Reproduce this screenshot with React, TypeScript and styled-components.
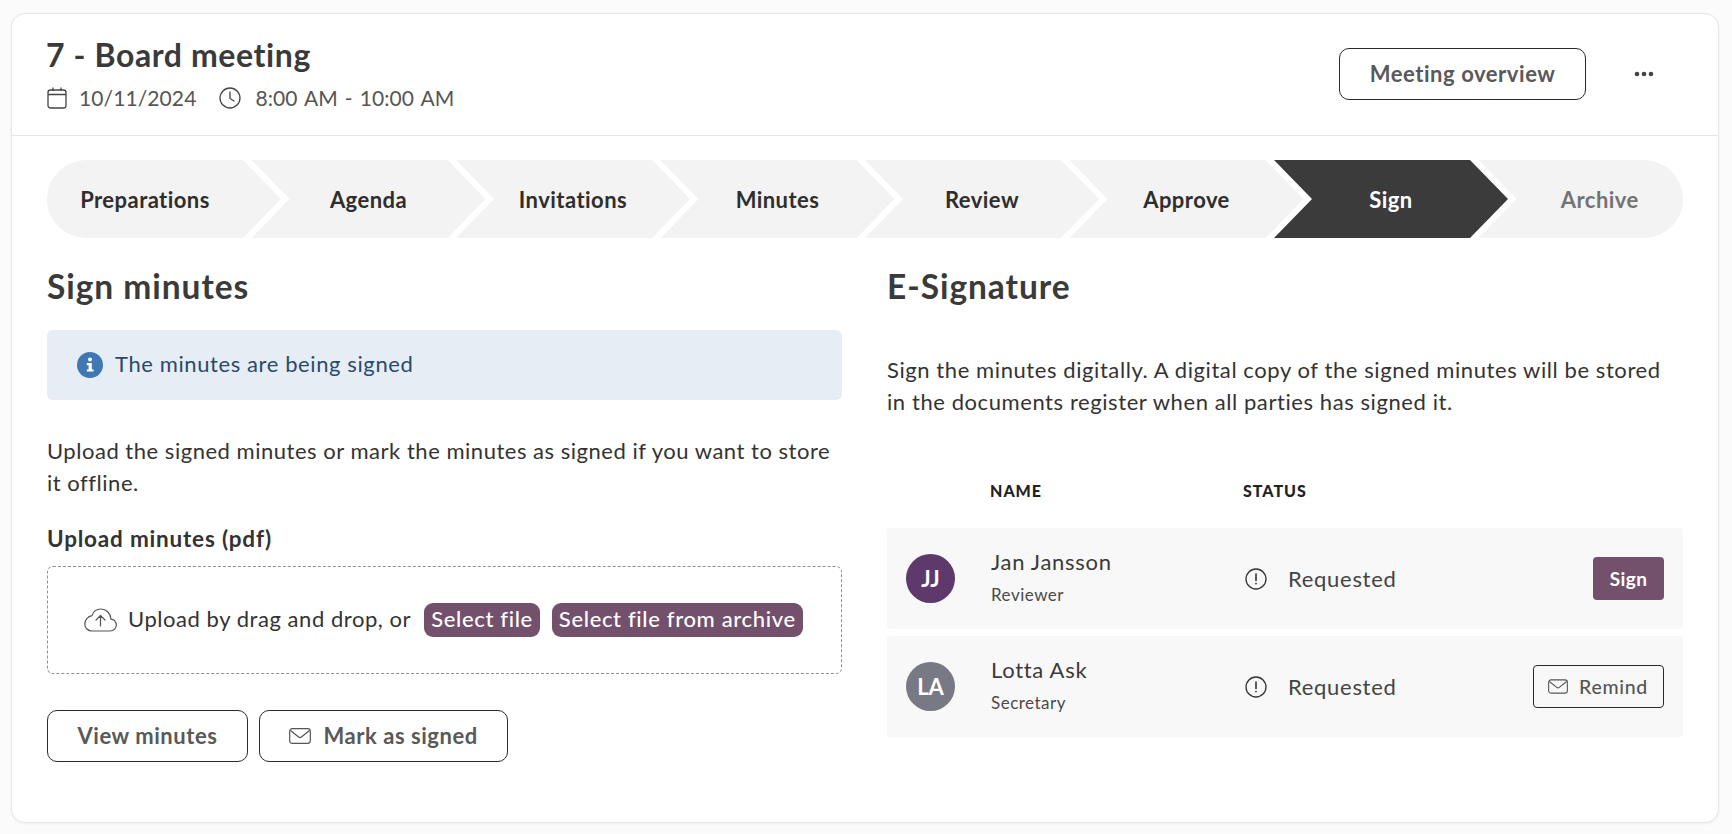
import React from "react";
import styled, { createGlobalStyle } from "styled-components";

const Global = createGlobalStyle`
  html, body { margin: 0; padding: 0; background: #fbfbfb; }
  body { font-family: "Lato", "Noto Sans", sans-serif; color: #333; }
  * { box-sizing: border-box; }
`;

const Page = styled.div`
  height: 834px;
  padding: 13px 13px 11px 11px;
`;

const Card = styled.main`
  height: 810px;
  background: #fff;
  border: 1px solid #e6e6e6;
  border-radius: 14px;
  box-shadow: 0 1px 3px rgba(0, 0, 0, 0.05);
`;

const Header = styled.header`
  height: 122px;
  padding: 0 64px 2px 34px;
  border-bottom: 1px solid #e6e6e6;
  display: flex;
  align-items: center;
  justify-content: space-between;
`;

const TitleBlock = styled.div`
  display: flex;
  flex-direction: column;
  gap: 8px;
`;

const Title = styled.h1`
  margin: 1px 0 0;
  font-size: 32px;
  line-height: 40px;
  font-weight: 700;
  color: #3a3a3a;
  letter-spacing: 0.6px;
`;

const Meta = styled.div`
  display: flex;
  align-items: center;
  font-size: 21px;
  line-height: 30px;
  color: #555;
  letter-spacing: 0.1px;
  word-spacing: 1.5px;
`;

const MetaIcon = styled.svg<{ $gap: number }>`
  width: 22px;
  height: 22px;
  margin-right: ${(p) => p.$gap}px;
  flex: none;
`;

const MetaGap = styled.span`
  width: 23px;
`;

const HeaderActions = styled.div`
  display: flex;
  align-items: center;
  gap: 48px;
`;

const OutlineButton = styled.button`
  height: 52px;
  padding: 0 29.5px 1px;
  display: inline-flex;
  align-items: center;
  justify-content: center;
  gap: 12px;
  background: #fff;
  border: 1px solid #2b2b2b;
  border-radius: 10px;
  font: 700 22px "Lato", sans-serif;
  letter-spacing: 0.55px;
  color: #595959;
`;

const Dots = styled.svg`
  width: 20px;
  height: 6px;
  fill: #444;
`;

const Stepper = styled.ol`
  list-style: none;
  margin: 24px 35px 0 35px;
  padding: 0;
  display: grid;
  grid-template-columns: repeat(8, 1fr);
  height: 78px;
`;

const Step = styled.li<{ $active?: boolean; $muted?: boolean; $first?: boolean; $last?: boolean }>`
  display: flex;
  align-items: center;
  justify-content: center;
  margin-right: ${(p) => (p.$last ? "0" : "-29.5px")};
  padding-left: ${(p) => (p.$first ? "0" : "38px")};
  padding-right: ${(p) => (p.$last ? "0" : "38px")};
  background: ${(p) => (p.$active ? "#3b3b3b" : "#f3f3f3")};
  color: ${(p) => (p.$active ? "#fff" : p.$muted ? "#737373" : "#2e2e2e")};
  font-size: 22px;
  font-weight: 700;
  letter-spacing: 0.45px;
  border-radius: ${(p) => (p.$first ? "39px 0 0 39px" : p.$last ? "0 39px 39px 0" : "0")};
  clip-path: ${(p) =>
    p.$first
      ? "polygon(0 0, calc(100% - 38px) 0, 100% 50%, calc(100% - 38px) 100%, 0 100%)"
      : p.$last
      ? "polygon(0 0, 100% 0, 100% 100%, 0 100%, 38px 50%)"
      : "polygon(0 0, calc(100% - 38px) 0, 100% 50%, calc(100% - 38px) 100%, 0 100%, 38px 50%)"};
`;

const Columns = styled.div`
  margin: 24px 35px 0 35px;
  display: grid;
  grid-template-columns: 795px 796px;
  column-gap: 45px;
`;

const Column = styled.section`
  display: flex;
  flex-direction: column;
`;

const Heading = styled.h2`
  margin: -1px 0 1px;
  font-size: 33.5px;
  line-height: 50px;
  font-weight: 700;
  color: #3a3a3a;
  letter-spacing: 0.95px;
`;

const InfoBox = styled.div`
  margin-top: 18px;
  height: 70px;
  padding: 0 30px 3px;
  display: flex;
  align-items: center;
  gap: 12px;
  background: #e6edf4;
  border-radius: 6px;
  color: #2a4a6b;
  font-size: 22px;
  letter-spacing: 0.6px;
`;

const InfoIcon = styled.svg`
  width: 26px;
  height: 26px;
  flex: none;
  margin-top: 3px;
`;

const Paragraph = styled.p`
  margin: 35px 0 0;
  font-size: 22px;
  line-height: 31.5px;
  letter-spacing: 0.52px;
  color: #333;
`;

const SidePara = styled(Paragraph)`
  margin-top: 42px;
  letter-spacing: 0.58px;
`;

const Label = styled.div`
  margin-top: 26px;
  font-size: 22.5px;
  line-height: 30px;
  font-weight: 700;
  color: #333;
  letter-spacing: 0.8px;
`;

const DropZone = styled.div`
  margin-top: 12px;
  height: 108px;
  border: 1px dashed #8f8f8f;
  border-radius: 6px;
  padding-left: 36px;
  display: flex;
  align-items: center;
`;

const DropText = styled.span`
  margin: 0 13px 4px 11px;
  font-size: 22px;
  letter-spacing: 0.55px;
  color: #333;
`;

const Pill = styled.button`
  height: 34px;
  padding: 0 7px 3px;
  margin-right: 12px;
  border: 0;
  border-radius: 9px;
  background: #73516c;
  color: #fff;
  font: 500 22px "Lato", sans-serif;
  letter-spacing: 0.65px;
`;

const ButtonRow = styled.div`
  margin-top: 36px;
  display: flex;
  gap: 11px;
`;

const TableHead = styled.div`
  margin-top: 64px;
  display: grid;
  grid-template-columns: 103px 253px 1fr;
  font-size: 16px;
  line-height: 20px;
  font-weight: 900;
  letter-spacing: 1px;
  color: #222;
`;

const Rows = styled.div`
  margin-top: 27px;
  display: flex;
  flex-direction: column;
  gap: 7px;
`;

const Row = styled.div`
  height: 101px;
  padding: 0 19px;
  display: grid;
  grid-template-columns: 85px 252px 1fr auto;
  align-items: center;
  background: #f8f8f8;
  border-radius: 3px;
`;

const Avatar = styled.div<{ $bg: string }>`
  width: 49px;
  height: 49px;
  border-radius: 50%;
  background: ${(p) => p.$bg};
  color: #fff;
  font-size: 22px;
  font-weight: 700;
  display: flex;
  align-items: center;
  justify-content: center;
`;

const Person = styled.div`
  display: flex;
  flex-direction: column;
  gap: 7px;
  padding-bottom: 3px;
`;

const PersonName = styled.div`
  font-size: 22px;
  line-height: 28px;
  letter-spacing: 0.7px;
  color: #3a3a3a;
`;

const PersonRole = styled.div`
  font-size: 17px;
  line-height: 24px;
  letter-spacing: 0.5px;
  color: #4a4a4a;
`;

const Status = styled.div`
  display: flex;
  align-items: center;
  gap: 21px;
  padding: 0 0 0 2px;
  font-size: 22px;
  letter-spacing: 0.7px;
  color: #444;
`;

const StatusIcon = styled.svg`
  width: 22px;
  height: 22px;
  flex: none;
`;

const SignButton = styled.button`
  width: 71px;
  height: 43px;
  padding: 0;
  border: 0;
  border-radius: 4px;
  background: #73516c;
  color: #fff;
  font: 700 19px "Lato", sans-serif;
  letter-spacing: 0.4px;
`;

const RemindButton = styled.button`
  height: 43px;
  padding: 0 15px 0 14px;
  display: inline-flex;
  align-items: center;
  gap: 11px;
  background: transparent;
  border: 1px solid #2b2b2b;
  border-radius: 4px;
  color: #555;
  font: 500 19.5px "Lato", sans-serif;
  letter-spacing: 0.7px;
`;

const Mail = ({ w = 22, h = 16 }: { w?: number; h?: number }) => (
  <svg width={w} height={h} viewBox="0 0 22 16" fill="none" stroke="#555" strokeWidth="1.2">
    <rect x="0.7" y="0.7" width="20.6" height="14.6" rx="2.5" />
    <path d="M1.5 2.5 L9.6 9 a2.2 2.2 0 0 0 2.8 0 L20.5 2.5" />
  </svg>
);

const steps = ["Preparations", "Agenda", "Invitations", "Minutes", "Review", "Approve", "Sign", "Archive"];

const AlertIcon = () => (
  <StatusIcon viewBox="0 0 22 22" fill="none" stroke="#333" strokeWidth="1.3">
    <circle cx="11" cy="11" r="10" />
    <path d="M11 6 V12.5" strokeWidth="1.6" strokeLinecap="round" />
    <circle cx="11" cy="15.6" r="0.9" fill="#333" stroke="none" />
  </StatusIcon>
);

export default function App() {
  return (
    <Page>
      <Global />
      <Card>
        <Header>
          <TitleBlock>
            <Title>7 - Board meeting</Title>
            <Meta>
              <MetaIcon $gap={11} viewBox="0 0 20 22" fill="none" stroke="#444" strokeWidth="1.3">
                <rect x="1" y="3" width="18" height="18" rx="2.5" />
                <path d="M1 7.5 H19 M6 0.5 V4 M14 0.5 V4" />
              </MetaIcon>
              10/11/2024
              <MetaGap />
              <MetaIcon $gap={14} viewBox="0 0 22 22" fill="none" stroke="#444" strokeWidth="1.3">
                <circle cx="11" cy="11" r="10" />
                <path d="M11 5 V11.5 L15 14" strokeLinecap="round" />
              </MetaIcon>
              8:00 AM - 10:00 AM
            </Meta>
          </TitleBlock>
          <HeaderActions>
            <OutlineButton>Meeting overview</OutlineButton>
            <Dots viewBox="0 0 20 6">
              <circle cx="3" cy="3" r="2.3" />
              <circle cx="10" cy="3" r="2.3" />
              <circle cx="17" cy="3" r="2.3" />
            </Dots>
          </HeaderActions>
        </Header>
        <Stepper>
          {steps.map((s, i) => (
            <Step key={s} $first={i === 0} $last={i === 7} $active={s === "Sign"} $muted={s === "Archive"}>
              {s}
            </Step>
          ))}
        </Stepper>
        <Columns>
          <Column>
            <Heading>Sign minutes</Heading>
            <InfoBox>
              <InfoIcon viewBox="0 0 26 26">
                <circle cx="13" cy="13" r="13" fill="#3f78b3" />
                <circle cx="13" cy="7.6" r="2" fill="#fff" />
                <path d="M9.8 11 H14.8 V17.4 H16.6 V19.6 H9.8 V17.4 H11.6 V13.2 H9.8 Z" fill="#fff" />
              </InfoIcon>
              The minutes are being signed
            </InfoBox>
            <Paragraph>Upload the signed minutes or mark the minutes as signed if you want to store it offline.</Paragraph>
            <Label>Upload minutes (pdf)</Label>
            <DropZone>
              <svg width="33" height="24" viewBox="0 0 33 24" fill="none" stroke="#555" strokeWidth="1.2">
                <path d="M8 23 H26 C30 23 32.3 20 32.3 17 C32.3 13.6 29.8 11.3 27 11.2 C26.6 5 22 1 16.8 1 C12.5 1 9.3 3.6 8 7.6 C3.8 8.4 0.8 12 0.8 16 C0.8 20 4 23 8 23 Z" />
                <path d="M16.5 18 V7.5 M12 12 L16.5 7.5 L21 12" strokeLinecap="round" strokeLinejoin="round" />
              </svg>
              <DropText>Upload by drag and drop, or</DropText>
              <Pill>Select file</Pill>
              <Pill>Select file from archive</Pill>
            </DropZone>
            <ButtonRow>
              <OutlineButton>View minutes</OutlineButton>
              <OutlineButton>
                <Mail />
                Mark as signed
              </OutlineButton>
            </ButtonRow>
          </Column>
          <Column>
            <Heading>E-Signature</Heading>
            <SidePara>
              Sign the minutes digitally. A digital copy of the signed minutes will be stored in the documents register when all parties has signed it.
            </SidePara>
            <TableHead>
              <span />
              <span>NAME</span>
              <span>STATUS</span>
            </TableHead>
            <Rows>
              <Row>
                <Avatar $bg="#5d3a6b">JJ</Avatar>
                <Person>
                  <PersonName>Jan Jansson</PersonName>
                  <PersonRole>Reviewer</PersonRole>
                </Person>
                <Status>
                  <AlertIcon />
                  Requested
                </Status>
                <SignButton>Sign</SignButton>
              </Row>
              <Row>
                <Avatar $bg="#797986">LA</Avatar>
                <Person>
                  <PersonName>Lotta Ask</PersonName>
                  <PersonRole>Secretary</PersonRole>
                </Person>
                <Status>
                  <AlertIcon />
                  Requested
                </Status>
                <RemindButton>
                  <Mail w={20} h={15} />
                  Remind
                </RemindButton>
              </Row>
            </Rows>
          </Column>
        </Columns>
      </Card>
    </Page>
  );
}
